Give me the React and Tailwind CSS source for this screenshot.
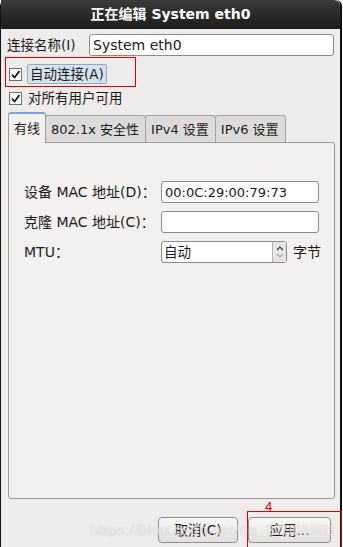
const font = { fontFamily: '"DejaVu Sans", "Noto Sans CJK SC", sans-serif' };

const Check = () => (
  <span className="w-[13px] h-[13px] border border-[#6f6f6f] bg-white flex items-center justify-center shrink-0">
    <svg width="11" height="11" viewBox="0 0 11 11">
      <path d="M2 5.5 L4.5 8.5 L9.5 2" fill="none" stroke="#1a1a1a" strokeWidth="1.8" />
    </svg>
  </span>
);

const Tab = ({ label, active }) =>
  active ? (
    <div className="h-[31px] px-[5px] flex items-center bg-[#f2f1f0] border border-b-0 border-[#9a9a9a] border-t-2 border-t-[#7ea3d2] rounded-t-[3px] -mb-px z-10 relative text-[13px]">
      {label}
    </div>
  ) : (
    <div className="h-[27px] pl-[5px] pr-[6px] flex items-center bg-[#dcdbd9] border border-b-0 border-[#a3a3a3] rounded-t-[3px] text-[13px] -ml-px">
      {label}
    </div>
  );

const Field = ({ value }) => (
  <div className="w-[158px] h-[22px] bg-white border border-[#8a8a8a] rounded-[3px] px-[3px] flex items-center text-[13px]">
    {value}
  </div>
);

export default function App() {
  return (
    <div className="w-[343px] h-[547px] bg-white relative overflow-hidden text-[#1a1a1a]" style={font}>
      <div className="w-[342px] h-full bg-[#edeceb] border-l border-r-2 border-[#111] rounded-t-[6px] flex flex-col">
        <div className="h-[29px] shrink-0 rounded-tr-[6px] bg-gradient-to-b from-[#3a3a3a] to-[#1c1c1c] flex items-center justify-center text-white font-bold text-[14px]">
          正在编辑 System eth0
        </div>

        <div className="flex items-center px-[6px] pt-[5px] gap-[6px]">
          <span className="text-[13.5px] w-[76px]">连接名称(I)</span>
          <div className="flex-1 h-[22px] bg-white border border-[#8a8a8a] rounded-[3px] px-[3px] flex items-center text-[14px]">
            System eth0
          </div>
        </div>

        <div className="flex items-center pl-[8px] mt-[8px] gap-[5px]">
          <Check />
          <span className="h-[20px] px-[2px] flex items-center bg-[#d8e2ee] border border-[#95a8c2] rounded-[2px] text-[13.5px]">
            自动连接(A)
          </span>
        </div>

        <div className="flex items-center pl-[8px] mt-[4px] gap-[6px]">
          <Check />
          <span className="text-[13.5px]">对所有用户可用</span>
        </div>

        <div className="flex items-end px-[7px] mt-[4px]">
          <Tab label="有线" active />
          <Tab label="802.1x 安全性" />
          <Tab label="IPv4 设置" />
          <Tab label="IPv6 设置" />
        </div>

        <div className="mx-[7px] w-[327px] h-[357px] bg-[#f2f1f0] border border-[#9a9a9a] rounded-b-[3px] rounded-tr-[3px] pt-[38px] pl-[15px] flex flex-col gap-[8px] text-[14px]">
          <div className="flex items-center">
            <span className="w-[137px]">设备 MAC 地址(D)：</span>
            <Field value="00:0C:29:00:79:73" />
          </div>
          <div className="flex items-center">
            <span className="w-[137px]">克隆 MAC 地址(C)：</span>
            <Field value="" />
          </div>
          <div className="flex items-center">
            <span className="w-[137px]">MTU：</span>
            <div className="w-[126px] h-[22px] bg-white border border-[#8a8a8a] rounded-[3px] flex items-center text-[13.5px]">
              <span className="flex-1 px-[2px]">自动</span>
              <span className="w-[14px] h-full border-l border-[#b5b5b5] bg-[#e6e5e3] flex flex-col items-center justify-center">
                <svg width="8" height="16" viewBox="0 0 8 16">
                  <path d="M1 6 L4 3 L7 6" fill="none" stroke="#333" strokeWidth="1.2" />
                  <path d="M1 10 L4 13 L7 10" fill="none" stroke="#aaa" strokeWidth="1.2" />
                </svg>
              </span>
            </div>
            <span className="ml-[6px]">字节</span>
          </div>
        </div>

        <div className="flex justify-end gap-[10px] pr-[9px] mt-[18px]">
          <button className="w-[80px] h-[26px] rounded-[4px] border border-[#8d8d8d] bg-gradient-to-b from-[#f7f7f6] to-[#e2e1df] text-[13.5px]">
            取消(C)
          </button>
          <button className="w-[83px] h-[26px] rounded-[4px] border border-[#8d8d8d] bg-gradient-to-b from-[#f7f7f6] to-[#e2e1df] text-[13.5px]">
            应用...
          </button>
        </div>
      </div>

      <div className="absolute left-[5px] top-[57px] w-[131px] h-[30px] border border-[#e00000]" />
      <div className="absolute left-[247px] top-[511px] w-[95px] h-[37px] border border-[#e00000]" />
      <div className="absolute left-[265px] top-[497px] text-[#e00000] text-[13px]" style={{ fontFamily: '"Liberation Sans", sans-serif' }}>4</div>
      <div className="absolute left-[90px] top-[519px] text-[15px] text-white/60 tracking-[0.5px] pointer-events-none" style={{ fontFamily: '"Liberation Sans", sans-serif', textShadow: '0 0 1px rgba(150,150,150,0.5)' }}>
        https://blog.csdn.net/qq_37906901
      </div>
    </div>
  );
}
